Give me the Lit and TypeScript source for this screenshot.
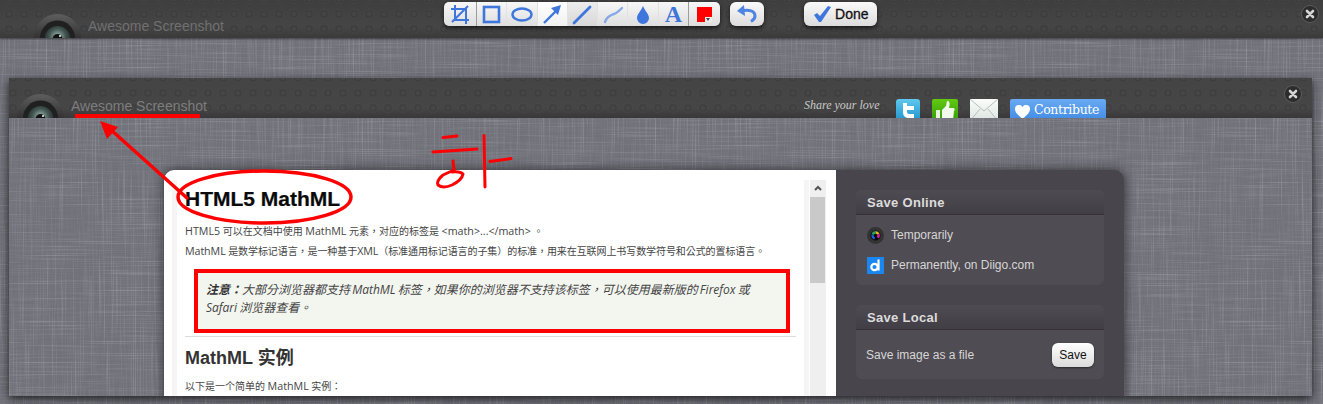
import { LitElement, html, css, svg } from "lit";
import { customElement } from "lit/decorators.js";

const lens = html`<svg class="lens" viewBox="0 0 47 47" width="47" height="47">
  <defs>
    <radialGradient id="lg" cx=".5" cy=".42" r=".6"><stop offset="0" stop-color="#a9c2b8"/><stop offset=".5" stop-color="#465a56"/><stop offset="1" stop-color="#1a1c1d"/></radialGradient>
    <linearGradient id="rg" x1="0" y1="0" x2="0" y2="1"><stop offset="0" stop-color="#5e5e5e"/><stop offset=".5" stop-color="#333"/></linearGradient>
  </defs>
  <circle cx="23.5" cy="23.5" r="23.5" fill="url(#rg)"/>
  <circle cx="23.5" cy="24" r="17.500" fill="#202020"/>
  <circle cx="23.5" cy="25" r="13" fill="url(#lg)"/>
  <circle cx="23.5" cy="25" r="5" fill="#0d1112"/>
  <circle cx="26" cy="22" r="1" fill="#fff"/>
</svg>`;

const closeBtn = html`<svg class="close" viewBox="0 0 18 18" width="18" height="18">
  <circle cx="9" cy="9" r="8.5" fill="#2c2c2c" stroke="#5c5c5c"/>
  <path d="M6 6l6 6M12 6l-6 6" stroke="#d4d4d4" stroke-width="2.6" stroke-linecap="round"/>
</svg>`;

const blue = "#3f76dc";
const tools = [
  svg`<path d="M9 3v15h14M5 7h15v15M6 20L22 4" fill="none" stroke="${blue}" stroke-width="2"/>`,
  svg`<rect x="6" y="5" width="15" height="15" fill="none" stroke="${blue}" stroke-width="2.6"/>`,
  svg`<ellipse cx="14" cy="12.5" rx="9.5" ry="6" fill="none" stroke="${blue}" stroke-width="2.4"/>`,
  svg`<path d="M6 21L19 8" stroke="${blue}" stroke-width="2.4"/><path d="M23 3l-10 3 7 7z" fill="${blue}"/>`,
  svg`<path d="M6 21L22 5" stroke="${blue}" stroke-width="2.8" stroke-linecap="round"/>`,
  svg`<path d="M6 20c2-6 6-7 9-8s5-3 8-6" fill="none" stroke="#6f98e6" stroke-width="2.400" stroke-linecap="round" opacity=".8"/>`,
  svg`<path d="M14 4c2 5 6 8 6 12a6 6 0 0 1-12 0c0-4 4-7 6-12z" fill="${blue}"/>`,
];

@customElement("app-root")
export class AppRoot extends LitElement {
  static styles = css`
    :host {
      display: block;
      width: 1323px;
      height: 404px;
      overflow: hidden;
      position: relative;
      font-family: "Liberation Sans", Arial, sans-serif;
      background-color: #6e6f77;
      background-image: url("data:image/svg+xml,%3Csvg xmlns='http://www.w3.org/2000/svg' width='600' height='600'%3E%3Cfilter id='a' x='0' y='0' width='100%25' height='100%25'%3E%3CfeTurbulence type='fractalNoise' baseFrequency='.03 .85' numOctaves='2' seed='4' stitchTiles='stitch'/%3E%3CfeColorMatrix values='0 0 0 0 .22 0 0 0 0 .22 0 0 0 0 .26 0 0 0 1 -.34'/%3E%3C/filter%3E%3Cfilter id='b' x='0' y='0' width='100%25' height='100%25'%3E%3CfeTurbulence type='fractalNoise' baseFrequency='.85 .03' numOctaves='2' seed='9' stitchTiles='stitch'/%3E%3CfeColorMatrix values='0 0 0 0 .22 0 0 0 0 .22 0 0 0 0 .26 0 0 0 1 -.34'/%3E%3C/filter%3E%3Cfilter id='c' x='0' y='0' width='100%25' height='100%25'%3E%3CfeTurbulence type='fractalNoise' baseFrequency='.9 .012' numOctaves='2' seed='21' stitchTiles='stitch'/%3E%3CfeColorMatrix values='0 0 0 0 .85 0 0 0 0 .85 0 0 0 0 .88 0 0 0 1.600 -.84'/%3E%3C/filter%3E%3Cfilter id='d' x='0' y='0' width='100%25' height='100%25'%3E%3CfeTurbulence type='fractalNoise' baseFrequency='.012 .9' numOctaves='2' seed='31' stitchTiles='stitch'/%3E%3CfeColorMatrix values='0 0 0 0 .85 0 0 0 0 .85 0 0 0 0 .88 0 0 0 1.600 -.84'/%3E%3C/filter%3E%3Crect width='600' height='600' filter='url(%23a)' opacity='.55'/%3E%3Crect width='600' height='600' filter='url(%23b)' opacity='.55'/%3E%3Crect width='600' height='600' filter='url(%23c)' opacity='.3'/%3E%3Crect width='600' height='600' filter='url(%23d)' opacity='.3'/%3E%3C/svg%3E");
    }
    .bar {
      display: flex;
      align-items: flex-start;
      overflow: hidden;
      background-color: #434343;
      background-image:
        radial-gradient(circle at center, #444 0 2.4px, #393939 2.9px 3.7px, #474747 4.1px 4.4px, transparent 4.9px),
        linear-gradient(#3e3e3e, #454545 70%, #3a3a3a);
      background-size: 15px 15px, 100% 100%;
    }
    .bar.top {
      height: 38px;
      background-position: 1.5px 6.5px, 0 0;
      box-shadow: 0 1px 2px rgba(0, 0, 0, 0.5);
    }
    .bar.inner {
      height: 40px;
      background-position: -3.5px -7.5px, 0 0;
      background-image:
        radial-gradient(circle at center, #464646 0 2.4px, #3b3b3b 2.9px 3.7px, #494949 4.1px 4.4px, transparent 4.9px),
        linear-gradient(#444, #464646 75%, #383838);
    }
    .lens { flex: none; }
    .top .lens { margin: 14px 0 0 34px; }
    .inner .lens { margin: 16px 0 0 8px; }
    .title {
      flex: none;
      font-size: 14px;
      line-height: 16px;
      color: #707070;
      margin-left: 7px;
    }
    .top .title { margin-top: 18px; }
    .inner .title { margin-top: 20px; color: #7d7d7d; }
    .toolbar {
      flex: none;
      display: flex;
      height: 24px;
      margin: 2px 0 0 220px;
      border-radius: 5px;
      overflow: hidden;
      background: linear-gradient(#f7f7f7, #dedede);
      box-shadow: 0 2px 4px rgba(0, 0, 0, 0.65);
    }
    .tool {
      flex: none;
      width: 30.3px;
      height: 24px;
      display: flex;
      align-items: center;
      justify-content: center;
      border-left: 1px solid #e2e2e2;
      box-sizing: border-box;
    }
    .tool:first-child { width: 32px; border-left: none; }
    .tool.sep { border-left: 1px solid #9c9c9c; }
    .tool.on { background: linear-gradient(#ffffff, #f0f0f0); }
    .tool.dim { background: linear-gradient(#ececec, #d8d8d8); }
    .tool.color { width: 32px; }
    .letter {
      font: bold 24px/24px "Liberation Serif", serif;
      color: #3f76dc;
    }
    .swatch {
      width: 15px;
      height: 15px;
      background: #f00;
      position: relative;
    }
    .caret {
      position: absolute;
      right: 0;
      bottom: 0;
      width: 7px;
      height: 5px;
      background: #ececec;
    }
    .caret::after {
      content: "";
      position: absolute;
      left: 1px;
      top: 1px;
      border: 2.5px solid transparent;
      border-top: 3px solid #444;
      border-bottom: 0;
    }
    .btn {
      flex: none;
      height: 24px;
      margin-top: 2px;
      border-radius: 6px;
      display: flex;
      align-items: center;
      justify-content: center;
      background: linear-gradient(#fafafa, #dcdcdc);
      box-shadow: 0 2px 4px rgba(0, 0, 0, 0.65);
    }
    .undo { width: 34px; margin-left: 10px; }
    .done {
      width: 73px;
      box-sizing: border-box;
      margin-left: 40px;
      padding-left: 9px;
      justify-content: flex-start;
      gap: 4px;
      font-size: 14px;
      color: #111;
      -webkit-text-stroke: 0.3px #111;
    }
    .close { flex: none; margin-left: auto; }
    .top .close { margin-top: 5px; margin-right: 4px; }
    .inner .close { margin-top: 7px; margin-right: 10px; }

    .window {
      height: 318px;
      margin: 40px 11px 0 9px;
      overflow: hidden;
      background: inherit;
      box-shadow: 0 3px 9px rgba(0, 0, 0, 0.75);
    }
    .share-label {
      flex: none;
      margin: 18px 0 0 597px;
      width: 76px;
      font: italic 12px/18px "Liberation Serif", serif;
      color: #c9c9c9;
      white-space: nowrap;
    }
    .social { flex: none; margin-top: 21px; display: block; }
    .tw { margin-left: 16px; }
    .th { margin-left: 12px; }
    .ml { margin-left: 12px; }
    .contribute {
      flex: none;
      width: 96px;
      height: 26px;
      margin: 21px 0 0 12px;
      box-sizing: border-box;
      padding: 2px 0 0 5px;
      border-radius: 2px;
      display: flex;
      align-items: flex-start;
      gap: 4px;
      background: linear-gradient(#6aa9f2, #3a86e2);
      color: #fff;
      font: 12.5px/18px "DejaVu Serif", serif;
      letter-spacing: -0.35px;
    }
    .contribute svg { margin-top: 4px; flex: none; }

    .panel {
      display: flex;
      width: 960px;
      height: 240px;
      margin: 52px 0 0 155px;
      border-radius: 10px 10px 0 0;
      overflow: hidden;
      box-shadow: 0 0 12px rgba(0, 0, 0, 0.6);
      background: #49454c;
    }
    .doc {
      flex: none;
      width: 672px;
      box-sizing: border-box;
      background: #fff;
      padding: 10px 10px 0 8px;
      display: flex;
      font-family: "Open Sans", "Noto Sans CJK TC", sans-serif;
    }
    .rail { flex: none; width: 5px; background: #f5f5f5; }
    .article {
      flex: none;
      width: 627px;
      box-sizing: border-box;
      padding-left: 8px;
      padding-right: 8px;
      color: #444;
      font-size: 10px;
    }
    .en { font-size: 10.7px; }
    h1 {
      margin: 0;
      font: bold 21px/38px "Liberation Sans", sans-serif;
      color: #0a0a0a;
      -webkit-text-stroke: 0.2px #0a0a0a;
    }
    .article p {
      margin: 0;
      line-height: 20px;
      white-space: nowrap;
    }
    .article .lead { padding-top: 3px; }
    .article .tight { letter-spacing: -0.08px; }
    .note {
      margin: 8px 0 0 9px;
      width: 596px;
      height: 64px;
      box-sizing: border-box;
      padding: 12px 12px;
      background: #f3f5ef;
      font-style: italic;
      font-size: 12px;
      line-height: 18px;
      white-space: nowrap;
      word-spacing: -1px;
    }
    .note b { color: #333; }
    hr {
      border: 0;
      border-top: 1px solid #dcdcdc;
      margin: 3px 0 0;
    }
    h2 {
      margin: 7px 0 0;
      font: bold 18px/28px "Liberation Sans", "Noto Sans CJK TC", sans-serif;
      color: #333;
    }
    .article .after { margin-top: 4px; }
    .scroll {
      flex: none;
      width: 16px;
      margin-left: 1px;
      background: #efefef;
    }
    .scroll svg { display: block; margin: 5px 0 0 4px; }
    .thumb {
      width: 15px;
      height: 86px;
      margin-top: 5px;
      background: #c9c9c9;
    }
    .side {
      flex: 1;
      padding: 20px 20px 0;
      display: flex;
      flex-direction: column;
      gap: 20px;
    }
    .box {
      border-radius: 6px;
      overflow: hidden;
      background: #504c53;
    }
    .box-h {
      height: 25px;
      box-sizing: border-box;
      padding-left: 11px;
      font: bold 13px/25px "Liberation Sans", sans-serif;
      letter-spacing: 0.3px;
      color: #dcdcdc;
      background: linear-gradient(#4f4b52, #423e45);
      border-bottom: 1px solid #3a2f34;
    }
    .online { height: 95px; }
    .local { height: 74px; }
    .row {
      display: flex;
      align-items: center;
      height: 30px;
      padding-left: 11px;
      gap: 7px;
      font-size: 12px;
      color: #d6d6d6;
    }
    .rows { padding-top: 5px; }
    .file {
      display: flex;
      align-items: center;
      justify-content: space-between;
      height: 49px;
      padding: 0 10px;
      font-size: 12px;
      color: #d6d6d6;
    }
    .save {
      width: 42px;
      height: 24px;
      border-radius: 6px;
      display: flex;
      align-items: center;
      justify-content: center;
      color: #111;
      font-size: 12px;
      background: linear-gradient(#ffffff, #dadada);
      box-shadow: 0 1px 2px rgba(0, 0, 0, 0.5);
    }
    .ink {
      position: absolute;
      left: 0;
      top: 0;
      pointer-events: none;
    }
  `;

  render() {
    return html`
      <div class="bar top">
        ${lens}
        <div class="title">Awesome Screenshot</div>
        <div class="toolbar">
          ${tools.map(
            (t, i) => html`<div class="tool ${i === 1 ? "sep" : ""} ${i === 3 ? "on" : ""} ${i === 4 ? "dim" : ""}">
              <svg width="28" height="24" viewBox="0 0 28 24">${t}</svg>
            </div>`
          )}
          <div class="tool"><span class="letter">A</span></div>
          <div class="tool sep color"><div class="swatch"><i class="caret"></i></div></div>
        </div>
        <div class="btn undo">
          <svg width="24" height="20" viewBox="0 0 24 20">
            <path d="M6 7c8-2 14 0 14 5 0 2.500-1.500 4-4 5.500" fill="none" stroke="#4f84e2" stroke-width="3"/>
            <path d="M9 1L2 7l8 5z" fill="#4f84e2"/>
          </svg>
        </div>
        <div class="btn done">
          <svg width="18" height="18" viewBox="0 0 18 18">
            <path d="M1 10l3-2 3 3L15 1l3 1-10 15h-2z" fill="${blue}"/>
          </svg>
          <span>Done</span>
        </div>
        ${closeBtn}
      </div>

      <div class="window">
        <div class="bar inner">
          ${lens}
          <div class="title">Awesome Screenshot</div>
          <div class="share-label">Share your love</div>
          <svg class="social tw" width="24" height="24" viewBox="0 0 24 24">
            <defs><linearGradient id="tg" x1="0" y1="0" x2="0" y2="1"><stop offset="0" stop-color="#5fc8ee"/><stop offset="1" stop-color="#1a8fc9"/></linearGradient></defs>
            <rect width="24" height="24" rx="3" fill="url(#tg)"/>
            <path d="M9 4v9c0 3 2 4 4 4h5M9 9h9" fill="none" stroke="#fff" stroke-width="4"/>
          </svg>
          <svg class="social th" width="26" height="24" viewBox="0 0 26 24">
            <defs><linearGradient id="gg" x1="0" y1="0" x2="0" y2="1"><stop offset="0" stop-color="#62c911"/><stop offset="1" stop-color="#2f9a08"/></linearGradient></defs>
            <rect width="26" height="24" rx="2" fill="url(#gg)"/>
            <rect x="4" y="11" width="4" height="10" fill="#e8f5dc"/>
            <path d="M10 11l4-4 1-5c3 0 3 3 2 7h4c2 0 2 2 1 3l-1 9H10z" fill="#f4f9ee"/>
          </svg>
          <svg class="social ml" width="28" height="24" viewBox="0 0 28 24">
            <defs><linearGradient id="mg" x1="0" y1="0" x2="0" y2="1"><stop offset="0" stop-color="#fbfdfb"/><stop offset="1" stop-color="#d9e2dd"/></linearGradient></defs>
            <rect y="0" width="28" height="24" fill="url(#mg)"/>
            <path d="M0 0l14 12L28 0M0 22l10-12M28 22L18 10" fill="none" stroke="#b4bfba"/>
          </svg>
          <div class="contribute">
            <svg width="15" height="14" viewBox="0 0 15 14"><path d="M7.500 14C3 10 0 7.500 0 4a4 4 0 0 1 7.500-2A4 4 0 0 1 15 4c0 3.500-3 6-7.500 10z" fill="#fff"/></svg>
            <span>Contribute</span>
          </div>
          ${closeBtn}
        </div>

        <div class="panel">
          <div class="doc">
            <div class="rail"></div>
            <div class="article">
              <h1>HTML5 MathML</h1>
              <p class="lead"><span class="en">HTML5</span> 可以在文档中使用 <span class="en">MathML</span> 元素，对应的标签是 <span class="en">&lt;math&gt;...&lt;/math&gt;</span> 。</p>
              <p class="tight"><span class="en">MathML</span> 是数学标记语言，是一种基于<span class="en">XML</span>（标准通用标记语言的子集）的标准，用来在互联网上书写数学符号和公式的置标语言。</p>
              <div class="note"><b>注意：</b>大部分浏览器都支持 MathML 标签，如果你的浏览器不支持该标签，可以使用最新版的 Firefox 或<br />Safari 浏览器查看。</div>
              <hr />
              <h2>MathML 实例</h2>
              <p class="after">以下是一个简单的 <span class="en">MathML</span> 实例：</p>
            </div>
            <div class="rail"></div>
            <div class="scroll">
              <svg width="8" height="7" viewBox="0 0 8 7"><path d="M1 5l3-3 3 3" fill="none" stroke="#555" stroke-width="2"/></svg>
              <div class="thumb"></div>
            </div>
          </div>
          <div class="side">
            <div class="box online">
              <div class="box-h">Save Online</div>
              <div class="rows">
                <div class="row">
                  <svg width="17" height="17" viewBox="0 0 17 17">
                    <circle cx="8.500" cy="8.500" r="8.500" fill="#333"/>
                    <circle cx="8.500" cy="8.500" r="5" fill="#0a0a0a"/>
                    <path d="M8.500 8.500V4a4.500 4.500 0 0 1 4 2.500z" fill="#e8b820"/>
                    <path d="M8.500 8.500l4-2a4.500 4.500 0 0 1-1 5z" fill="#d0209a"/>
                    <path d="M8.500 8.500V4a4.500 4.500 0 0 0-4 3z" fill="#20b060"/>
                    <path d="M8.500 8.500l-4-1a4.500 4.500 0 0 0 3 5z" fill="#2060d0"/>
                    <circle cx="8.500" cy="8.500" r="1.800" fill="#0a0a0a"/>
                  </svg>
                  <span>Temporarily</span>
                </div>
                <div class="row">
                  <svg width="17" height="17" viewBox="0 0 17 17">
                    <rect width="17" height="17" fill="#1a86f0"/>
                    <circle cx="7.500" cy="10" r="3.200" fill="none" stroke="#fff" stroke-width="2.200"/>
                    <path d="M11.500 2.500v11" stroke="#fff" stroke-width="2.200"/>
                  </svg>
                  <span>Permanently, on Diigo.com</span>
                </div>
              </div>
            </div>
            <div class="box local">
              <div class="box-h">Save Local</div>
              <div class="file">
                <span>Save image as a file</span>
                <div class="save">Save</div>
              </div>
            </div>
          </div>
        </div>
      </div>

      <svg class="ink" width="1323" height="404" viewBox="0 0 1323 404">
        <g fill="none" stroke="#f00" stroke-linecap="round" stroke-linejoin="round">
          <path d="M75 116H200" stroke-width="4" stroke-linecap="butt"/>
          <path d="M187 198L110 129" stroke-width="3.500"/>
          <ellipse cx="264.500" cy="197" rx="86.500" ry="26" stroke-width="3.500"/>
          <rect x="196" y="271" width="592" height="60" stroke-width="4" stroke-linecap="butt" stroke-linejoin="miter"/>
          <path d="M443 137.500L457 136M433 152L477 149M484 135.500L485 187M490 161.500L511 158.500" stroke-width="3"/>
          <path d="M453 161L454 170L443 175Q436 181 438 185Q443 189 452 185Q462 180 463 174Q460 171 452 172" stroke-width="3"/>
        </g>
        <path d="M100 121L118 127L107 139z" fill="#f00"/>
      </svg>
    `;
  }
}
